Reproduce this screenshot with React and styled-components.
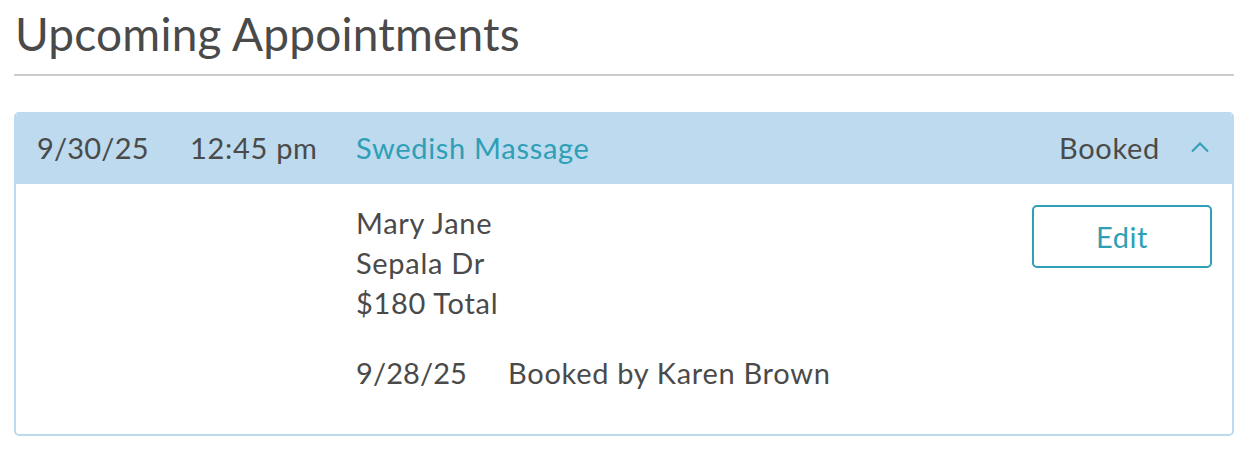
import React from "react";
import styled, { createGlobalStyle } from "styled-components";

const Global = createGlobalStyle`
  html, body { margin: 0; padding: 0; background: #ffffff; }
  body { font-family: Lato, "Open Sans", sans-serif; color: #4a4a4a; }
`;

const Page = styled.div`
  padding: 0 16px 0 14px;
`;

const Title = styled.h1`
  margin: 0;
  padding: 6px 0 0 1px;
  font-size: 46px;
  font-weight: 400;
  line-height: 56px;
  color: #4a4a4a;
  letter-spacing: 0.2px;
`;

const Rule = styled.hr`
  margin: 12px 0 36px;
  border: 0;
  height: 2px;
  background: #cccccc;
`;

const Card = styled.section`
  border: 2px solid #bddaee;
  border-radius: 5px;
  overflow: hidden;
`;

const cols = "153px 166px 1fr auto";

const Header = styled.div`
  display: grid;
  grid-template-columns: ${cols} auto;
  align-items: center;
  height: 70px;
  box-sizing: border-box;
  padding: 0 22px 3px 21px;
  background: #bddaee;
  font-size: 29px;
  letter-spacing: 0.7px;
`;

const Cell = styled.span`
  color: ${(p) => (p.$accent ? "#2e9fb6" : "#4a4a4a")};
  letter-spacing: ${(p) => (p.$num ? "0.2px" : "inherit")};
`;

const Status = styled.span`
  color: #4a4a4a;
  margin-right: 30px;
`;

const Chevron = styled.svg`
  width: 20px;
  height: 12px;
  display: block;
  margin-bottom: 2px;
`;

const Body = styled.div`
  display: grid;
  grid-template-columns: ${cols};
  padding: 19px 20px 41px 21px;
  font-size: 29px;
  letter-spacing: 0.7px;
`;

const Details = styled.div`
  grid-column: 3;
  display: flex;
  flex-direction: column;
`;

const Line = styled.div`
  line-height: 40px;
  margin-top: ${(p) => (p.$gap ? "30px" : "0")};
  display: flex;
  gap: 41px;
`;

const Num = styled.span`
  letter-spacing: 0.1px;
`;

const EditButton = styled.button`
  grid-column: 4;
  align-self: start;
  margin-top: 2px;
  width: 180px;
  height: 63px;
  border: 2px solid #2e9fb6;
  border-radius: 5px;
  background: #ffffff;
  color: #2e9fb6;
  font-family: Lato, "Open Sans", sans-serif;
  font-size: 29px;
  letter-spacing: 0.6px;
  cursor: pointer;
`;

export default function App() {
  return (
    <>
      <Global />
      <Page>
        <Title>Upcoming Appointments</Title>
        <Rule />
        <Card>
          <Header>
            <Cell $num>9/30/25</Cell>
            <Cell>12:45 pm</Cell>
            <Cell $accent>Swedish Massage</Cell>
            <Status>Booked</Status>
            <Chevron viewBox="0 0 20 12">
              <path d="M2 10.5 L10 2.5 L18 10.5" fill="none" stroke="#2e9fb6" strokeWidth="2" />
            </Chevron>
          </Header>
          <Body>
            <Details>
              <Line>Mary Jane</Line>
              <Line>Sepala Dr</Line>
              <Line>$180 Total</Line>
              <Line $gap>
                <Num>9/28/25</Num>
                <span>Booked by Karen Brown</span>
              </Line>
            </Details>
            <EditButton>Edit</EditButton>
          </Body>
        </Card>
      </Page>
    </>
  );
}
